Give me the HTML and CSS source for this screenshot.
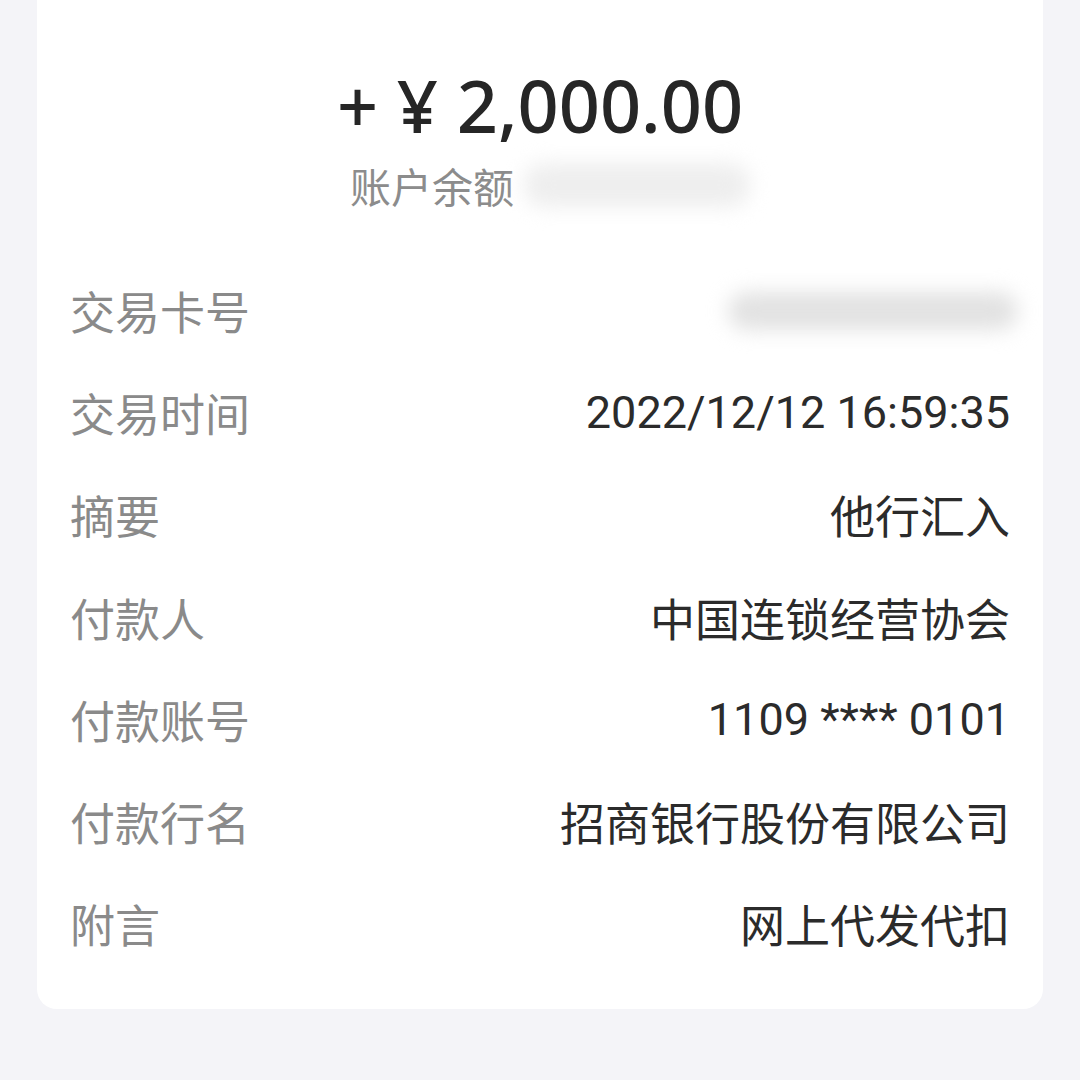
FILE: index.html
```html
<!DOCTYPE html>
<html lang="zh-CN">

<head>
    <meta charset="UTF-8">
    <meta name="viewport" content="width=device-width, initial-scale=1.0">
    <title>交易详情</title>
    <link rel="stylesheet" href="styles.css">
</head>

<body>
    <article class="receipt">
        <header class="summary">
            <p class="amount">+ ¥ 2,000.00</p>
            <p class="balance">
                <span class="balance-label">账户余额</span>
                <span class="masked masked-balance"></span>
            </p>
        </header>

        <dl class="details">
            <div class="row">
                <dt>交易卡号</dt>
                <dd><span class="masked masked-card"></span></dd>
            </div>
            <div class="row">
                <dt>交易时间</dt>
                <dd class="num">2022/12/12 16:59:35</dd>
            </div>
            <div class="row">
                <dt>摘要</dt>
                <dd>他行汇入</dd>
            </div>
            <div class="row">
                <dt>付款人</dt>
                <dd>中国连锁经营协会</dd>
            </div>
            <div class="row">
                <dt>付款账号</dt>
                <dd class="num">1109 **** 0101</dd>
            </div>
            <div class="row">
                <dt>付款行名</dt>
                <dd>招商银行股份有限公司</dd>
            </div>
            <div class="row">
                <dt>附言</dt>
                <dd>网上代发代扣</dd>
            </div>
        </dl>
    </article>
</body>

</html>
```

FILE: styles.css
```css
body {
    margin: 0;
    background: #f4f4f8;
    font-family: Roboto, "Noto Sans CJK SC", sans-serif;
}

.receipt {
    margin: 0 37px;
    padding: 65px 33px 34px 33px;
    background: #fff;
    border-radius: 0 0 20px 20px;
}

.summary {
    margin-bottom: 43px;
    text-align: center;
}

.summary p {
    margin: 0;
}

.amount {
    font-family: "Noto Sans", "Noto Sans CJK SC", sans-serif;
    font-size: 72px;
    font-weight: 500;
    line-height: 80px;
    color: #262626;
}

.summary .balance {
    display: flex;
    justify-content: center;
    align-items: center;
    gap: 10px;
    height: 62px;
    margin-top: 9px;
}

.balance-label {
    font-family: "Noto Sans CJK SC", sans-serif;
    font-size: 41px;
    line-height: 48px;
    color: #8c8c8c;
}

.masked {
    display: inline-block;
    background: #e2e2e2;
    border-radius: 20px;
    filter: blur(10px);
}

.masked-balance {
    width: 226px;
    height: 44px;
    margin-right: -20px;
    background: #eeeeee;
}

.masked-card {
    width: 290px;
    height: 38px;
    margin-right: -8px;
}

.details {
    margin: 0;
}

.row {
    display: flex;
    justify-content: space-between;
    align-items: center;
    height: 102.3px;
}

.row dt {
    font-family: "Noto Sans CJK SC", sans-serif;
    font-size: 45px;
    color: #8a8a8a;
}

.row dd {
    margin: 0;
    font-family: "Noto Sans CJK SC", sans-serif;
    font-size: 45px;
    color: #2b2b2b;
}

.row .num {
    font-family: Roboto, "Noto Sans CJK SC", sans-serif;
}
```
